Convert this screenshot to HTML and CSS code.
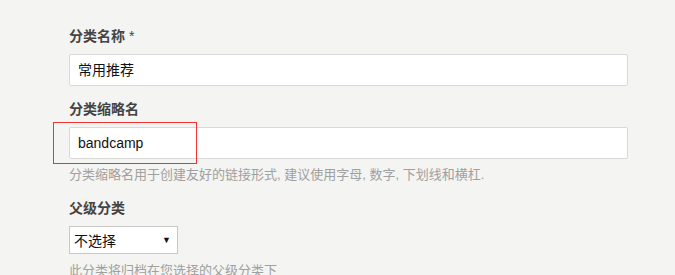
FILE: index.html
```html
<!DOCTYPE html>
<html lang="zh-CN">
<head>
<meta charset="utf-8">
<link rel="stylesheet" href="styles.css">
</head>
<body>
<div class="form">
  <div class="field f1">
    <label class="label">分类名称 <span class="req">*</span></label>
    <div class="input">常用推荐</div>
  </div>
  <div class="field f2">
    <label class="label">分类缩略名</label>
    <div class="input-wrap">
      <div class="input">bandcamp</div>
      <div class="highlight"></div>
    </div>
    <p class="help">分类缩略名用于创建友好的链接形式, 建议使用字母, 数字, 下划线和横杠.</p>
  </div>
  <div class="field f3">
    <label class="label">父级分类</label>
    <div class="select"><span>不选择</span><span class="arrow">▼</span></div>
    <p class="help help2">此分类将归档在您选择的父级分类下</p>
  </div>
</div>
</body>
</html>
```
FILE: styles.css
```css
html, body {
  margin: 0;
  padding: 0;
  background: #f4f4f2;
  font-family: "Liberation Sans", "Noto Sans CJK SC", sans-serif;
  overflow: hidden;
}
.form {
  padding: 26px 0 0 69px;
  width: 559px;
}
.field {
  margin-bottom: 13px;
}
.label {
  display: block;
  font-size: 14px;
  line-height: 20px;
  font-weight: bold;
  color: #444;
}
.req {
  font-weight: normal;
  color: #444;
}
.input {
  box-sizing: border-box;
  margin-top: 8px;
  height: 32px;
  border: 1px solid #d9d9d6;
  border-radius: 2px;
  background: #fff;
  padding: 0 8px;
  font-size: 14px;
  line-height: 30px;
  color: #111;
}
.input-wrap {
  position: relative;
}
.highlight {
  position: absolute;
  left: -16px;
  top: -5px;
  width: 144px;
  height: 42px;
  border: 1px solid #ee3333;
  box-sizing: border-box;
}
.help {
  margin: 6px 0 0;
  font-size: 13px;
  line-height: 20px;
  color: #a0a0a0;
}
.help2 { margin-top: 7px; }
.select {
  box-sizing: border-box;
  margin-top: 8px;
  width: 109px;
  height: 28px;
  border: 1px solid #c8c8c8;
  background: #fff;
  display: flex;
  align-items: center;
  justify-content: space-between;
  padding: 0 6px 0 4px;
  font-size: 14px;
  color: #111;
}
.arrow {
  font-size: 9px;
  color: #111;
}
```
